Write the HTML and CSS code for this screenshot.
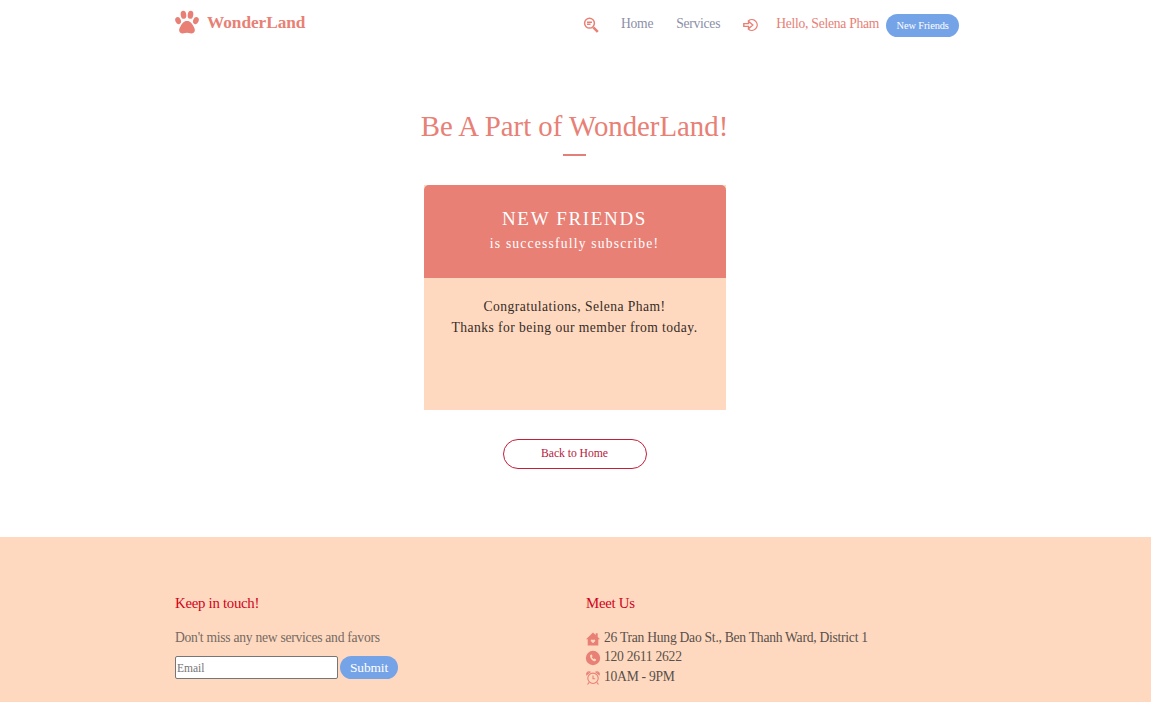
FILE: index.html
```html
<!DOCTYPE html>
<html lang="en">
<head>
<meta charset="utf-8">
<title>WonderLand</title>
<link rel="stylesheet" href="styles.css">
</head>
<body>
<div class="page">
  <header class="header">
    <a class="brand">
      <svg class="paw" viewBox="0 0 24 24"><ellipse cx="8.500" cy="4.800" rx="2.800" ry="4" transform="rotate(-8 8.500 4.800)"/><ellipse cx="15.500" cy="4.800" rx="2.800" ry="4" transform="rotate(8 15.500 4.800)"/><ellipse cx="3.100" cy="10.600" rx="2.700" ry="3.600" transform="rotate(-24 3.100 10.600)"/><ellipse cx="20.900" cy="10.600" rx="2.700" ry="3.600" transform="rotate(24 20.900 10.600)"/><path d="M12 11c3.600 0 5 2.700 6.300 5 1.300 2.200 2 3.800 1.300 5.600-.8 1.800-2.700 2.200-4.200 1.700-2.200-.8-4.600-.8-6.800 0-1.500.5-3.400.1-4.200-1.700-.7-1.800 0-3.400 1.300-5.600 1.300-2.300 2.700-5 6.300-5z"/></svg>
      <span class="brand-name">WonderLand</span>
    </a>
    <nav class="nav">
      <svg class="nav-icon search" viewBox="0 0 16 16"><circle cx="6.500" cy="6.200" r="4.900"/><path d="M4 5.300h5M4 7.300h3.500"/><path class="handle" d="M10.300 10.300l4.500 4.500"/></svg>
      <a class="link">Home</a>
      <a class="link">Services</a>
      <svg class="nav-icon login" viewBox="0 0 16 16"><path d="M5.500 3.700A5.400 5.400 0 1 1 5.500 12.300"/><path d="M.8 6.600h4.700V4.300L9.800 8l-4.300 3.700V9.400H.8z"/></svg>
      <span class="hello">Hello, Selena Pham</span>
      <a class="badge">New Friends</a>
    </nav>
  </header>
  <main class="main">
    <h1 class="title">Be A Part of WonderLand!</h1>
    <div class="rule"></div>
    <section class="card">
      <div class="card-head">
        <h2 class="plan">NEW FRIENDS</h2>
        <p class="status">is successfully subscribe!</p>
      </div>
      <p class="message">Congratulations, Selena Pham!<br>Thanks for being our member from today.</p>
    </section>
    <a class="back">Back to Home</a>
  </main>
  <footer class="footer">
    <section class="touch">
      <h3 class="heading">Keep in touch!</h3>
      <p class="note">Don't miss any new services and favors</p>
      <form class="form">
        <input class="email" type="text" placeholder="Email">
        <button class="submit" type="button">Submit</button>
      </form>
    </section>
    <section class="meet">
      <h3 class="heading">Meet Us</h3>
      <ul class="contacts">
        <li class="contact"><svg class="icon" viewBox="0 0 14 14"><path fill-rule="evenodd" d="M7 .5l2.700 2.500V1.300h2v3.600L14 7.300h-1.700V13.500H1.700V7.300H0zM7 11.200l2-2c.9-1.200-.9-2.500-2-1.200-1.100-1.300-2.900 0-2 1.200z"/></svg><span>26 Tran Hung Dao St., Ben Thanh Ward, District 1</span></li>
        <li class="contact"><svg class="icon" viewBox="0 0 14 14"><circle cx="7" cy="7" r="7.200"/><path class="handset" d="M4.700 3.700l1.100-.3.800 1.800-.8.900c.4.900 1 1.600 1.800 2l.9-.7 1.700 1-.4 1.200c-.3.600-1 .8-1.700.6C6 9.500 4.400 7.500 4.100 5.200c-.1-.7.100-1.300.6-1.500z"/></svg><span>120 2611 2622</span></li>
        <li class="contact"><svg class="icon alarm" viewBox="0 0 14 14"><circle cx="7" cy="7.300" r="5.200"/><path d="M7 4.500v3.300h2.200M.7 3.700C.4 1.300 2.200.3 4 1.100zM13.300 3.700C13.600 1.300 11.800.3 10 1.100zM3.200 11.300L1.500 13.500M10.800 11.300l1.700 2.200"/></svg><span>10AM - 9PM</span></li>
      </ul>
    </section>
  </footer>
</div>
</body>
</html>
```
FILE: styles.css
```css
* { box-sizing: border-box; margin: 0; padding: 0; }
body { background: #fff; overflow: hidden; font-family: "Liberation Serif", "Times New Roman", serif; font-size: 13.6px; letter-spacing: -.26px; }
.page { width: 1151px; height: 702px; display: flex; flex-direction: column; white-space: nowrap; }
h1, h2, h3 { font-weight: 400; }

.header { height: 50px; display: flex; padding-left: 175px; }
.brand { display: flex; gap: 8px; width: 408px; padding-top: 10px; color: #e88076; }
.paw { width: 24px; height: 24px; fill: #e88076; }
.brand-name { font-size: 17.28px; font-weight: 700; line-height: 26px; letter-spacing: -.05px; }
.nav { display: flex; align-items: center; height: 24px; margin-top: 13px; color: #8b8fa8; }
.nav-icon { width: 16px; height: 16px; fill: none; stroke: #e88076; stroke-width: 1.5; }
.search { margin-right: 22px; }
.handle { stroke-width: 2.6; }
.link { min-width: 32px; margin-right: 23px; line-height: 22px; padding-bottom: 2px; }
.login { margin-right: 17px; stroke-width: 1.4; }
.hello { width: 103px; color: #e88076; margin-right: 7px; padding-bottom: 2px; }
.badge { width: 73px; height: 23px; border-radius: 12px; background: #75a3e7; color: #fff; font-size: 10.4px; letter-spacing: -.1px; line-height: 23px; text-align: center; }

.main { width: 1149px; height: 487px; display: flex; flex-direction: column; align-items: center; padding-top: 59px; }
.title { font-size: 28.8px; line-height: 34px; letter-spacing: 0; color: #e88076; }
.rule { width: 23px; height: 2px; margin-top: 11px; background: #e08078; }
.card { width: 302px; height: 225px; margin: 29px 0; background: #ffd9bf; text-align: center; }
.card-head { height: 93px; padding-top: 21px; background: #e88076; border-radius: 5px 5px 0 0; color: #fff; }
.plan { font-size: 19px; line-height: 25px; letter-spacing: 1.65px; }
.status { line-height: 26px; letter-spacing: 1.2px; }
.message { padding-top: 19px; line-height: 20.5px; letter-spacing: .46px; color: #352c28; }
.back { width: 144px; height: 30px; border: 1px solid #c41e3a; border-radius: 15px; color: #b92040; font-size: 11.7px; letter-spacing: -.06px; line-height: 28px; text-align: center; }

.footer { flex: 1; display: flex; padding: 57px 0 0 175px; background: #ffd9bf; }
.touch { width: 411px; }
.heading { font-size: 14.8px; letter-spacing: -.27px; line-height: 18px; color: #d0021b; }
.note { margin-top: 17px; line-height: 18px; color: #756a64; }
.form { display: flex; gap: 2px; margin-top: 9px; }
.email { width: 163px; height: 23px; padding: 0 1px; border: 1px solid #767676; border-radius: 2px; background: #fff; font: 11.52px "Liberation Serif", serif; }
.email::placeholder { color: #757575; }
.submit { width: 58px; height: 23px; border: 0; border-radius: 12px; background: #75a3e7; color: #fff; font: 13.4px "Liberation Serif", serif; letter-spacing: -.1px; }
.contacts { list-style: none; margin-top: 16px; }
.contact { display: flex; gap: 4px; height: 19.4px; line-height: 20px; color: #58504c; }
.icon { width: 14px; height: 14px; margin-top: 4px; fill: #e88076; overflow: visible; }
.handset { fill: #ffd9bf; }
.alarm { fill: none; stroke: #e88076; stroke-width: 1.1; }
```
